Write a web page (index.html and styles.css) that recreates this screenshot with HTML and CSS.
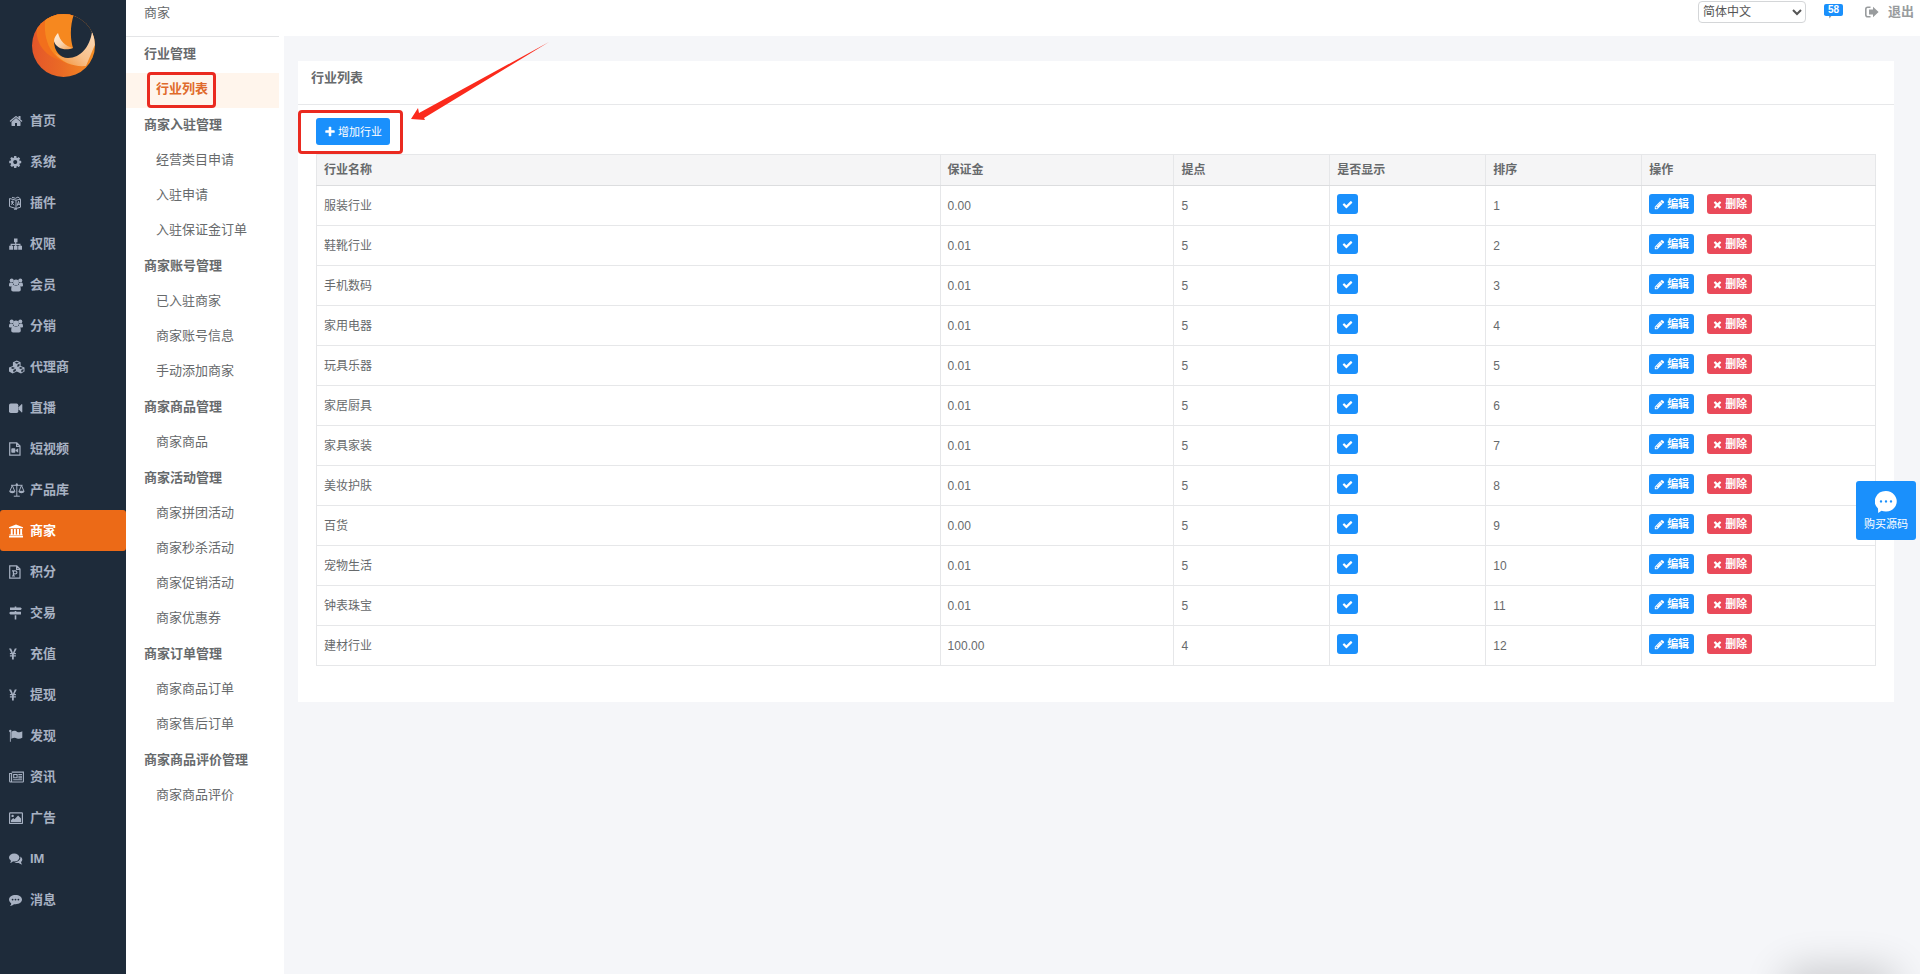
FILE: index.html
```html
<!DOCTYPE html>
<html lang="zh-CN">
<head>
<meta charset="utf-8">
<title>行业列表</title>
<link rel="stylesheet" href="styles.css">
</head>
<body>
<svg class="sprite" aria-hidden="true">
  <symbol id="i-check" viewBox="0 0 1792 1792"><path d="M1671 566q0 40-28 68l-724 724-136 136q-28 28-68 28t-68-28l-136-136-362-362q-28-28-28-68t28-68l136-136q28-28 68-28t68 28l294 295 656-657q28-28 68-28t68 28l136 136q28 28 28 68z"/></symbol>
  <symbol id="i-times" viewBox="0 0 1792 1792"><path d="M1490 1322q0 40-28 68l-136 136q-28 28-68 28t-68-28l-294-294-294 294q-28 28-68 28t-68-28l-136-136q-28-28-28-68t28-68l294-294-294-294q-28-28-28-68t28-68l136-136q28-28 68-28t68 28l294 294 294-294q28-28 68-28t68 28l136 136q28 28 28 68t-28 68l-294 294 294 294q28 28 28 68z"/></symbol>
  <symbol id="i-pencil" viewBox="0 0 1792 1792"><path d="M491 1536l91-91-235-235-91 91v107h128v128h107zm523-928q0-22-22-22-10 0-17 7l-542 542q-7 7-7 17 0 22 22 22 10 0 17-7l542-542q7-7 7-17zm-54-192l416 416-832 832h-416v-416zm683 96q0 53-37 90l-166 166-416-416 166-165q36-38 90-38 53 0 91 38l235 234q37 39 37 91z"/></symbol>
  <symbol id="i-plus" viewBox="0 0 1792 1792"><path d="M1600 736v192q0 40-28 68t-68 28h-416v416q0 40-28 68t-68 28h-192q-40 0-68-28t-28-68v-416h-416q-40 0-68-28t-28-68v-192q0-40 28-68t68-28h416v-416q0-40 28-68t68-28h192q40 0 68 28t28 68v416h416q40 0 68 28t28 68z"/></symbol>
  <symbol id="i-group" viewBox="0 0 16 14"><circle cx="2.700" cy="2.600" r="2"/><circle cx="11.300" cy="2.600" r="2"/><circle cx="7" cy="4.400" r="2.900"/><path d="M0 7.700C0 5.700.5 4.600 1.400 4.600l2.500.3C3.900 6 4 6.800 4.400 7.500l-1.600 1H1C.4 8.500 0 8.200 0 7.700zM14 7.700c0-2-.5-3.100-1.400-3.100l-2.500.3c0 1.100-.1 1.900-.5 2.600l1.600 1H13c.6 0 1-.3 1-.8z"/><path d="M2.200 11.600c0-3.200.9-4.600 2.300-4.600.5 0 1 .7 2.500.7S9 7 9.500 7c1.400 0 2.300 1.400 2.300 4.600 0 1.300-.7 2-1.900 2H4.100c-1.200 0-1.900-.7-1.900-2z"/></symbol>
  <symbol id="i-yen" viewBox="0 0 16 14"><path d="M0 1.500h2.100l1.500 3.600.3.900.4-.9 1.500-3.600h2L5.500 6.100h1.400v1.200H4.800v1h2.100v1.200H4.800v2.900H3V9.500H.9V8.300H3v-1H.9V6.100h1.400z"/></symbol>
</svg>

<div class="app">
  <nav class="sidebar">
    <a class="logo" href="#" aria-label="首页">
      <svg viewBox="0 0 64 64">
        <defs>
          <linearGradient id="g1" x1="0" y1="0" x2="1" y2="0"><stop offset="0" stop-color="#e4562a"/><stop offset=".45" stop-color="#ea6a25"/><stop offset="1" stop-color="#f58f22"/></linearGradient>
          <linearGradient id="g2" x1="1" y1="0" x2="0" y2="1"><stop offset="0" stop-color="#fbdcbc"/><stop offset=".55" stop-color="#f8c08a"/><stop offset="1" stop-color="#f28a2c"/></linearGradient>
          <linearGradient id="g3" x1="0" y1="0" x2="1" y2="1"><stop offset="0" stop-color="#fdeedd"/><stop offset=".5" stop-color="#fad6b2"/><stop offset="1" stop-color="#f49a45"/></linearGradient>
          <clipPath id="disc"><circle cx="31.500" cy="31.500" r="31.500"/></clipPath>
        </defs>
        <g clip-path="url(#disc)">
          <path fill="url(#g1)" d="M0 0h64v64H0z"/>
          <path fill="#f26f1c" d="M42 0H12C0 10 2 34 22 44l18 7z"/>
          <path fill="#f6881f" d="M42 0H14C10 22 16 44 40 51l14 1 8-30z"/>
          <path fill="url(#g2)" d="M60 16l4 12-10 24c-12 1-24-3-31-13 10 8 30 8 37-23z"/>
          <path fill="#1e2b3a" d="M42 0C38 12 38 24 41 34c-7 2-16 0-19-7 0 10 6 17 14 17 13 0 22-12 24-26h4V0z"/>
        </g>
        <path fill="url(#g3)" d="M26 19c2 8 7 13 15 15-7 3-17 1-19-7 0-3 2-6 4-8z"/>
      </svg>
    </a>
    <ul class="menu">
      <li><a href="#"><svg viewBox="0 0 1792 1792" class="fa"><path d="M1472 992v480q0 26-19 45t-45 19h-384v-384h-256v384h-384q-26 0-45-19t-19-45v-480q0-1 .5-3t.5-3l575-474 575 474q1 2 1 6zm223-69l-62 74q-8 9-21 11h-3q-13 0-21-7l-692-577-692 577q-12 8-24 7-13-2-21-11l-62-74q-8-10-7-23.500t11-21.500l719-599q32-26 76-26t76 26l244 204v-195q0-14 9-23t23-9h192q14 0 23 9t9 23v408l219 182q10 8 11 21.500t-7 23.500z"/></svg>首页</a></li>
      <li><a href="#"><svg viewBox="100 0 1792 1792" class="fa"><path d="M1152 896q0-106-75-181t-181-75-181 75-75 181 75 181 181 75 181-75 75-181zm512-109v222q0 12-8 23t-20 13l-185 28q-19 54-39 91 35 50 107 138 10 12 10 25t-9 23q-27 37-99 108t-94 71q-12 0-26-9l-138-108q-44 23-91 38-16 136-29 186-7 28-36 28h-222q-14 0-24.500-8.500t-11.500-21.500l-28-184q-49-16-90-37l-141 107q-10 9-25 9-14 0-25-11-126-114-165-168-7-10-7-23 0-12 8-23 15-21 51-66.500t54-70.500q-27-50-41-99l-183-27q-13-2-21-12.500t-8-23.500v-222q0-12 8-23t19-13l186-28q14-46 39-92-40-57-107-138-10-12-10-24 0-10 9-23 26-36 98.500-107.500t94.500-71.500q13 0 26 10l138 107q44-23 91-38 16-136 29-186 7-28 36-28h222q14 0 24.500 8.500t11.500 21.500l28 184q49 16 90 37l142-107q9-9 24-9 13 0 25 10 129 119 165 170 7 8 7 22 0 12-8 23-15 21-51 66.500t-54 70.500q26 50 41 98l183 28q13 2 21 12.500t8 23.500z"/></svg>系统</a></li>
      <li><a href="#"><svg viewBox="0 0 16 14"><path fill="none" stroke="currentColor" d="M.5 2.500L7 4.200v8.300L.5 10.500zM7 4.200l4.500-1v8L7 12.500M3 1.300l3.500 1L9 1l2.500 2M2 5.500l3 .8M3.800 4.500c0 2-.6 3.500-1.800 4.300M2.500 6.500l2.500 2.700M8.200 9.800l1.300-4.500 1 3.800M8.500 8.300h1.800M5 13.200h3"/></svg>插件</a></li>
      <li><a href="#"><svg viewBox="0 0 16 14"><path d="M5 1.500h3.500v3.700H7.300v1.600h4.200v2h1.500v3.900H9.200V8.800h1.300V7.900H7.300v.9h1.200v3.900H4.800V8.800h1.300v-.9H2.800v.9H4v3.900H.2V8.800h1.400v-2h4.500V5.200H5z"/></svg>权限</a></li>
      <li><a href="#"><svg><use href="#i-group"/></svg>会员</a></li>
      <li><a href="#"><svg><use href="#i-group"/></svg>分销</a></li>
      <li><a href="#"><svg viewBox="0 0 16 14"><path fill-rule="evenodd" d="M7.800.6l3.800 1.600v3.700l3.900 1.700v4L12 13.500l-4.200-1.900-4.200 1.900L0 11.600v-4l3.900-1.700V2.200zM7.800 1.800L5.600 2.700l2.200 1 2.200-1zM8.400 4.700v2.200l2.100-1V3.800zM3.800 7L1.700 8l2.100.9L6 8zM4.300 9.900v2.300l2.500-1.100V8.800zM11.800 7L9.700 8l2.100.9L14 8zM12.300 9.900v2.300l2.200-1V8.900z"/></svg>代理商</a></li>
      <li><a href="#"><svg viewBox="0 0 16 14"><rect y="2.500" width="9.300" height="9.500" rx="1.700"/><path d="M9.500 6.300l3-3q.8-.5.8.4v7.100q0 .9-.8.400l-3-3z"/></svg>直播</a></li>
      <li><a href="#"><svg viewBox="0 0 16 14"><path fill="none" stroke="currentColor" stroke-width="1.200" d="M.7.900h7.100l3.200 3.200v9H.7zM7.600.9v3.400H11"/><rect x="2.300" y="6.300" width="4" height="4.500" rx=".8"/><path d="M6.500 8.300l2.700-2v4.500l-2.700-2z"/></svg>短视频</a></li>
      <li><a href="#"><svg viewBox="0 0 16 14"><path fill="none" stroke="currentColor" d="M7.800.5V13M2 2.300h11.600M4.800 13.200h6M3.300 2.500L.8 8.300h5zM12.500 2.500L10 8.300h5z"/><path d="M.2 8.300h6.200C6 10.800.6 10.800.2 8.300zM9.300 8.300h6.200c-.4 2.500-5.800 2.500-6.200 0z"/><circle cx="7.800" cy="1.800" r="1.200"/></svg>产品库</a></li>
      <li class="active"><a href="#"><svg viewBox="0 0 16 14"><path d="M7 .5l7 2.800v1H0v-1zM1.800 5h1.900v5.500H5V5h1.800v5.500h1.300V5H10v5.500h1.200V5h1.900v5.500h.6v1H.4v-1h1.400zM0 12h14v1.500H0z"/></svg>商家</a></li>
      <li><a href="#"><svg viewBox="0 0 16 14"><path fill="none" stroke="currentColor" stroke-width="1.200" d="M.7.900h7.100l3.200 3.200v9H.7zM7.600.9v3.400H11"/><path fill="none" stroke="currentColor" stroke-width="1.200" d="M3 5.900h3.200c2.300 0 2.300 3 0 3H4.500M4.400 6v5M3 11h3"/></svg>积分</a></li>
      <li><a href="#"><svg viewBox="0 0 16 14"><path d="M5.700.6h1.600v.9h4.300l1.300 1.200-1.300 1.300H1V1.500h4.700zM5.700 5h1.600v.8H12v2.600H1.400L.1 7.100l1.300-1.300h4.300zM5.700 9.200h1.600v4.300H5.700z"/></svg>交易</a></li>
      <li><a href="#"><svg><use href="#i-yen"/></svg>充值</a></li>
      <li><a href="#"><svg><use href="#i-yen"/></svg>提现</a></li>
      <li><a href="#"><svg viewBox="0 0 16 14"><circle cx="1.300" cy="2" r="1.200"/><path d="M.9 2h.9v10.800H.9zM2.300 3c3-2 4.500-1 6 0 1.500.8 3 .2 5-.8v6.500c-2 1.200-3.500 1.500-5.300.7-2-1-3.500-.8-5.700.4z"/></svg>发现</a></li>
      <li><a href="#"><svg viewBox="0 0 16 14"><path fill="none" stroke="currentColor" stroke-width="1.100" d="M2.700 2.100h11.700v9.300q0 .6-.6.600H1.500q-.9 0-.9-1V3.500h2V11q0 .9-1 1M4.700 4.500h3.400v3.200H4.700zM9.300 4.500h3.700M9.300 6.200h3.700M9.300 7.900h3.700M4.200 9.800H13"/></svg>资讯</a></li>
      <li><a href="#"><svg viewBox="0 0 16 14"><rect x=".6" y="1.900" width="12.800" height="10.600" rx=".6" fill="none" stroke="currentColor" stroke-width="1.200"/><circle cx="3.600" cy="4.900" r="1.200"/><path d="M2 11.200V9.300l2.200-2.200 1.300 1.200 3.600-3.700L12 7.500v3.700z"/></svg>广告</a></li>
      <li><a href="#"><svg viewBox="0 0 16 14"><ellipse cx="5.200" cy="5.500" rx="5.200" ry="4"/><path d="M2 8l2 1.200Q2.700 11 1 11q1-1.200 1-3z"/><path d="M11.300 4.500c2.800 1.600 2.300 4.500.7 5.500q.1 1.200 1.200 2.400-1.900.1-3.500-1.400c-2 .3-3.500-.2-4.200-.8 3.500-.2 6.500-2.400 5.800-5.700z"/></svg>IM</a></li>
      <li><a href="#"><svg viewBox="0 0 16 14"><path fill-rule="evenodd" d="M6.500 2C10.200 2 13 4 13 6.600s-2.800 4.700-6.500 4.700q-.8 0-1.500-.1Q3.200 12.900.9 13q1.500-1.300 1.300-2.700C.8 9.400 0 8.100 0 6.600 0 4 2.900 2 6.500 2zM3.600 5.700a.9.900 0 100 1.800.9.900 0 000-1.800zM6.500 5.700a.9.900 0 100 1.800.9.900 0 000-1.800zM9.400 5.700a.9.900 0 100 1.800.9.900 0 000-1.800z"/></svg>消息</a></li>
    </ul>
  </nav>

  <nav class="subnav">
    <h1 class="subnav-title">商家</h1>
    <h2>行业管理</h2>
    <ul>
      <li class="current"><a href="#">行业列表</a><span class="mark mark-menu"></span></li>
    </ul>
    <h2>商家入驻管理</h2>
    <ul>
      <li><a href="#">经营类目申请</a></li>
      <li><a href="#">入驻申请</a></li>
      <li><a href="#">入驻保证金订单</a></li>
    </ul>
    <h2>商家账号管理</h2>
    <ul>
      <li><a href="#">已入驻商家</a></li>
      <li><a href="#">商家账号信息</a></li>
      <li><a href="#">手动添加商家</a></li>
    </ul>
    <h2>商家商品管理</h2>
    <ul>
      <li><a href="#">商家商品</a></li>
    </ul>
    <h2>商家活动管理</h2>
    <ul>
      <li><a href="#">商家拼团活动</a></li>
      <li><a href="#">商家秒杀活动</a></li>
      <li><a href="#">商家促销活动</a></li>
      <li><a href="#">商家优惠券</a></li>
    </ul>
    <h2>商家订单管理</h2>
    <ul>
      <li><a href="#">商家商品订单</a></li>
      <li><a href="#">商家售后订单</a></li>
    </ul>
    <h2>商家商品评价管理</h2>
    <ul>
      <li><a href="#">商家商品评价</a></li>
    </ul>
  </nav>

  <div class="page">
    <header class="topbar">
      <select class="lang" aria-label="语言"><option>简体中文</option></select>
      <a class="notice" href="#">
        <svg viewBox="0 0 14 14"><path d="M0 2h14v8H9l-3 4-1-4H0z"/></svg>
        <span class="badge">58</span>
      </a>
      <a class="logout" href="#">
        <svg viewBox="0 0 14 12"><path fill="none" stroke="currentColor" stroke-width="1.600" d="M5.500 1.200H2.800Q.8 1.200.8 3.200v5.600q0 2 2 2h2.700"/><path d="M8 .8L13.600 6 8 11.200V8.400H4V3.600h4z"/></svg>
        退出
      </a>
    </header>

    <main class="content">
      <section class="panel">
        <h2 class="panel-title">行业列表</h2>
        <div class="panel-body">
          <div class="toolbar">
            <button class="btn btn-add" type="button"><svg><use href="#i-plus"/></svg>增加行业</button>
            <span class="mark mark-add"></span>
            <svg class="arrow" viewBox="0 0 140 80"><path fill="#fb2a1c" d="M1 78L8 67l1 5L139 1 14 77l1 2z"/></svg>
          </div>
          <table class="grid">
            <colgroup><col class="c-name"><col class="c-fee"><col class="c-num"><col class="c-num"><col class="c-num"><col class="c-fee"></colgroup>
            <thead>
              <tr><th>行业名称</th><th>保证金</th><th>提点</th><th>是否显示</th><th>排序</th><th>操作</th></tr>
            </thead>
            <tbody>
              <tr><td>服装行业</td><td>0.00</td><td>5</td><td class="act"><button class="btn" type="button" aria-label="显示"><svg><use href="#i-check"/></svg></button></td><td>1</td><td class="act"><div class="ops"><button class="btn" type="button"><svg><use href="#i-pencil"/></svg>编辑</button><button class="btn btn-del" type="button"><svg><use href="#i-times"/></svg>删除</button></div></td></tr>
              <tr><td>鞋靴行业</td><td>0.01</td><td>5</td><td class="act"><button class="btn" type="button" aria-label="显示"><svg><use href="#i-check"/></svg></button></td><td>2</td><td class="act"><div class="ops"><button class="btn" type="button"><svg><use href="#i-pencil"/></svg>编辑</button><button class="btn btn-del" type="button"><svg><use href="#i-times"/></svg>删除</button></div></td></tr>
              <tr><td>手机数码</td><td>0.01</td><td>5</td><td class="act"><button class="btn" type="button" aria-label="显示"><svg><use href="#i-check"/></svg></button></td><td>3</td><td class="act"><div class="ops"><button class="btn" type="button"><svg><use href="#i-pencil"/></svg>编辑</button><button class="btn btn-del" type="button"><svg><use href="#i-times"/></svg>删除</button></div></td></tr>
              <tr><td>家用电器</td><td>0.01</td><td>5</td><td class="act"><button class="btn" type="button" aria-label="显示"><svg><use href="#i-check"/></svg></button></td><td>4</td><td class="act"><div class="ops"><button class="btn" type="button"><svg><use href="#i-pencil"/></svg>编辑</button><button class="btn btn-del" type="button"><svg><use href="#i-times"/></svg>删除</button></div></td></tr>
              <tr><td>玩具乐器</td><td>0.01</td><td>5</td><td class="act"><button class="btn" type="button" aria-label="显示"><svg><use href="#i-check"/></svg></button></td><td>5</td><td class="act"><div class="ops"><button class="btn" type="button"><svg><use href="#i-pencil"/></svg>编辑</button><button class="btn btn-del" type="button"><svg><use href="#i-times"/></svg>删除</button></div></td></tr>
              <tr><td>家居厨具</td><td>0.01</td><td>5</td><td class="act"><button class="btn" type="button" aria-label="显示"><svg><use href="#i-check"/></svg></button></td><td>6</td><td class="act"><div class="ops"><button class="btn" type="button"><svg><use href="#i-pencil"/></svg>编辑</button><button class="btn btn-del" type="button"><svg><use href="#i-times"/></svg>删除</button></div></td></tr>
              <tr><td>家具家装</td><td>0.01</td><td>5</td><td class="act"><button class="btn" type="button" aria-label="显示"><svg><use href="#i-check"/></svg></button></td><td>7</td><td class="act"><div class="ops"><button class="btn" type="button"><svg><use href="#i-pencil"/></svg>编辑</button><button class="btn btn-del" type="button"><svg><use href="#i-times"/></svg>删除</button></div></td></tr>
              <tr><td>美妆护肤</td><td>0.01</td><td>5</td><td class="act"><button class="btn" type="button" aria-label="显示"><svg><use href="#i-check"/></svg></button></td><td>8</td><td class="act"><div class="ops"><button class="btn" type="button"><svg><use href="#i-pencil"/></svg>编辑</button><button class="btn btn-del" type="button"><svg><use href="#i-times"/></svg>删除</button></div></td></tr>
              <tr><td>百货</td><td>0.00</td><td>5</td><td class="act"><button class="btn" type="button" aria-label="显示"><svg><use href="#i-check"/></svg></button></td><td>9</td><td class="act"><div class="ops"><button class="btn" type="button"><svg><use href="#i-pencil"/></svg>编辑</button><button class="btn btn-del" type="button"><svg><use href="#i-times"/></svg>删除</button></div></td></tr>
              <tr><td>宠物生活</td><td>0.01</td><td>5</td><td class="act"><button class="btn" type="button" aria-label="显示"><svg><use href="#i-check"/></svg></button></td><td>10</td><td class="act"><div class="ops"><button class="btn" type="button"><svg><use href="#i-pencil"/></svg>编辑</button><button class="btn btn-del" type="button"><svg><use href="#i-times"/></svg>删除</button></div></td></tr>
              <tr><td>钟表珠宝</td><td>0.01</td><td>5</td><td class="act"><button class="btn" type="button" aria-label="显示"><svg><use href="#i-check"/></svg></button></td><td>11</td><td class="act"><div class="ops"><button class="btn" type="button"><svg><use href="#i-pencil"/></svg>编辑</button><button class="btn btn-del" type="button"><svg><use href="#i-times"/></svg>删除</button></div></td></tr>
              <tr><td>建材行业</td><td>100.00</td><td>4</td><td class="act"><button class="btn" type="button" aria-label="显示"><svg><use href="#i-check"/></svg></button></td><td>12</td><td class="act"><div class="ops"><button class="btn" type="button"><svg><use href="#i-pencil"/></svg>编辑</button><button class="btn btn-del" type="button"><svg><use href="#i-times"/></svg>删除</button></div></td></tr>
            </tbody>
          </table>
        </div>
      </section>
    </main>
  </div>
</div>

<a class="buy" href="#">
  <svg viewBox="0 0 22 22"><path fill-rule="evenodd" d="M11 0a11 10.300 0 11-4.500 19.800L3.200 22 3 17.500A11 10.300 0 0111 0zM6 9.200a1.200 1.200 0 100 2.400 1.200 1.200 0 000-2.400zM11 9.200a1.200 1.200 0 100 2.400 1.200 1.200 0 000-2.400zM16 9.200a1.200 1.200 0 100 2.400 1.200 1.200 0 000-2.400z"/></svg>
  购买源码
</a>
<div class="dock-shadow"></div>
</body>
</html>
```

FILE: styles.css
```css
* {
  box-sizing: border-box;
}

body {
  margin: 0;
  background: #f5f6f9;
  color: #676a6c;
  font: 13px/20px "Liberation Sans", "Noto Sans CJK SC", sans-serif;
}

ul {
  margin: 0;
  padding: 0;
  list-style: none;
}

h1,
h2 {
  margin: 0;
  font-size: 13px;
}

a {
  color: inherit;
  text-decoration: none;
}

svg {
  fill: currentColor;
  flex: none;
}

.sprite {
  position: absolute;
  width: 0;
  height: 0;
}

.app {
  display: flex;
  min-height: 100vh;
}

/* Main menu */
.sidebar {
  flex: none;
  width: 126px;
  background: #1e2b3a;
  color: #a7b1c2;
}

.logo {
  display: flex;
  padding: 14px 30px 22px 32px;
}

.logo svg {
  width: 64px;
  height: 64px;
}

.menu a {
  display: flex;
  align-items: center;
  gap: 5px;
  height: 41px;
  padding-left: 9px;
  border-radius: 3px;
  font-weight: 700;
}

.menu svg {
  width: 16px;
  height: 14px;
}

.menu .fa {
  width: 14px;
  margin-right: 2px;
}

.menu .active a {
  background: #ec6a17;
  color: #fff;
}

/* Section menu */
.subnav {
  flex: none;
  width: 158px;
  padding-right: 5px;
  background: #fff;
}

.subnav-title {
  height: 37px;
  padding: 3px 18px;
  border-bottom: 1px solid #e4e5e7;
  font-weight: 400;
}

.subnav h2 {
  padding: 7px 18px 9px;
}

.subnav li {
  position: relative;
  padding: 6px 30px 9px;
}

.subnav .current {
  background: #fff5ec;
  color: #e06a2b;
  font-weight: 700;
}

.mark {
  position: absolute;
  border: 3px solid #ea2a20;
  border-radius: 4px;
  pointer-events: none;
}

.mark-menu {
  top: -1px;
  left: 21px;
  width: 69px;
  height: 36px;
}

/* Top bar */
.page {
  flex: 1;
  min-width: 0;
}

.topbar {
  display: flex;
  justify-content: flex-end;
  align-items: center;
  height: 36px;
  padding: 0 6px 12px 0;
  background: #fff;
}

.lang {
  width: 108px;
  height: 22px;
  padding: 0;
  border: 1px solid #d4d6d8;
  border-radius: 4px;
  background: #fff;
  color: #555;
  font: 12px "Liberation Sans", "Noto Sans CJK SC", sans-serif;
}

.notice {
  position: relative;
  display: flex;
  width: 19px;
  margin: 0 22px 0 18px;
  color: #999c9e;
}

.notice svg {
  width: 13px;
  height: 14px;
}

.badge {
  position: absolute;
  top: -1px;
  left: 0;
  width: 19px;
  border-radius: 2px;
  background: #1a90fc;
  color: #fff;
  font: 700 10px/12px "Liberation Sans", sans-serif;
  text-align: center;
}

.logout {
  display: flex;
  align-items: center;
  gap: 9px;
  color: #999c9e;
  font-weight: 700;
}

.logout svg {
  width: 14px;
  height: 12px;
}

/* Panel */
.content {
  padding: 25px 26px 25px 14px;
}

.panel {
  background: #fff;
}

.panel-title {
  height: 44px;
  padding: 7px 13px;
  border-bottom: 1px solid #e7e8ea;
}

.panel-body {
  padding: 13px 18px 36px;
}

.toolbar {
  position: relative;
  display: flex;
  padding-bottom: 9px;
}

.btn {
  display: inline-flex;
  align-items: center;
  gap: 2px;
  height: 20px;
  padding: 0 5px;
  border: 0;
  border-radius: 3px;
  background: #1a90fc;
  color: #fff;
  font: 700 11px/20px "Liberation Sans", "Noto Sans CJK SC", sans-serif;
}

.btn svg {
  width: 11px;
  height: 11px;
}

.btn-del {
  background: #ea4a5a;
}

.btn-add {
  height: 27px;
  padding: 0 8px;
  font-weight: 400;
}

.btn-add svg {
  width: 12px;
  height: 12px;
}

.mark-add {
  top: -8px;
  left: -18px;
  width: 105px;
  height: 44px;
}

.arrow {
  position: absolute;
  top: -77px;
  left: 94px;
  width: 140px;
  height: 80px;
}

/* Table */
.grid {
  width: 100%;
  border-collapse: collapse;
  table-layout: fixed;
  font-size: 12px;
}

.c-name {
  width: 40%;
}

.c-fee {
  width: 15%;
}

.c-num {
  width: 10%;
}

.grid th,
.grid td {
  height: 40px;
  padding: 0 7px;
  border: 1px solid #e6e7e9;
  text-align: left;
}

.grid th {
  height: 31px;
  background: #f5f5f6;
  border-bottom-color: #dcdddf;
}

.grid .act {
  padding-top: 8px;
  vertical-align: top;
}

.grid .btn {
  vertical-align: top;
}

.ops {
  display: flex;
  gap: 13px;
}

/* Floating contact button */
.buy {
  position: fixed;
  top: 481px;
  right: 4px;
  display: flex;
  flex-direction: column;
  align-items: center;
  width: 60px;
  padding: 10px 0 5px;
  border-radius: 3px;
  background: #1a90fc;
  color: #fff;
  font-size: 11px;
  line-height: 22px;
}

.buy svg {
  width: 22px;
  height: 22px;
}

.dock-shadow {
  position: fixed;
  right: 30px;
  bottom: -24px;
  width: 100px;
  height: 20px;
  border-radius: 10px;
  box-shadow: 0 0 40px 8px rgba(0, 0, 0, 0.2);
}
```
